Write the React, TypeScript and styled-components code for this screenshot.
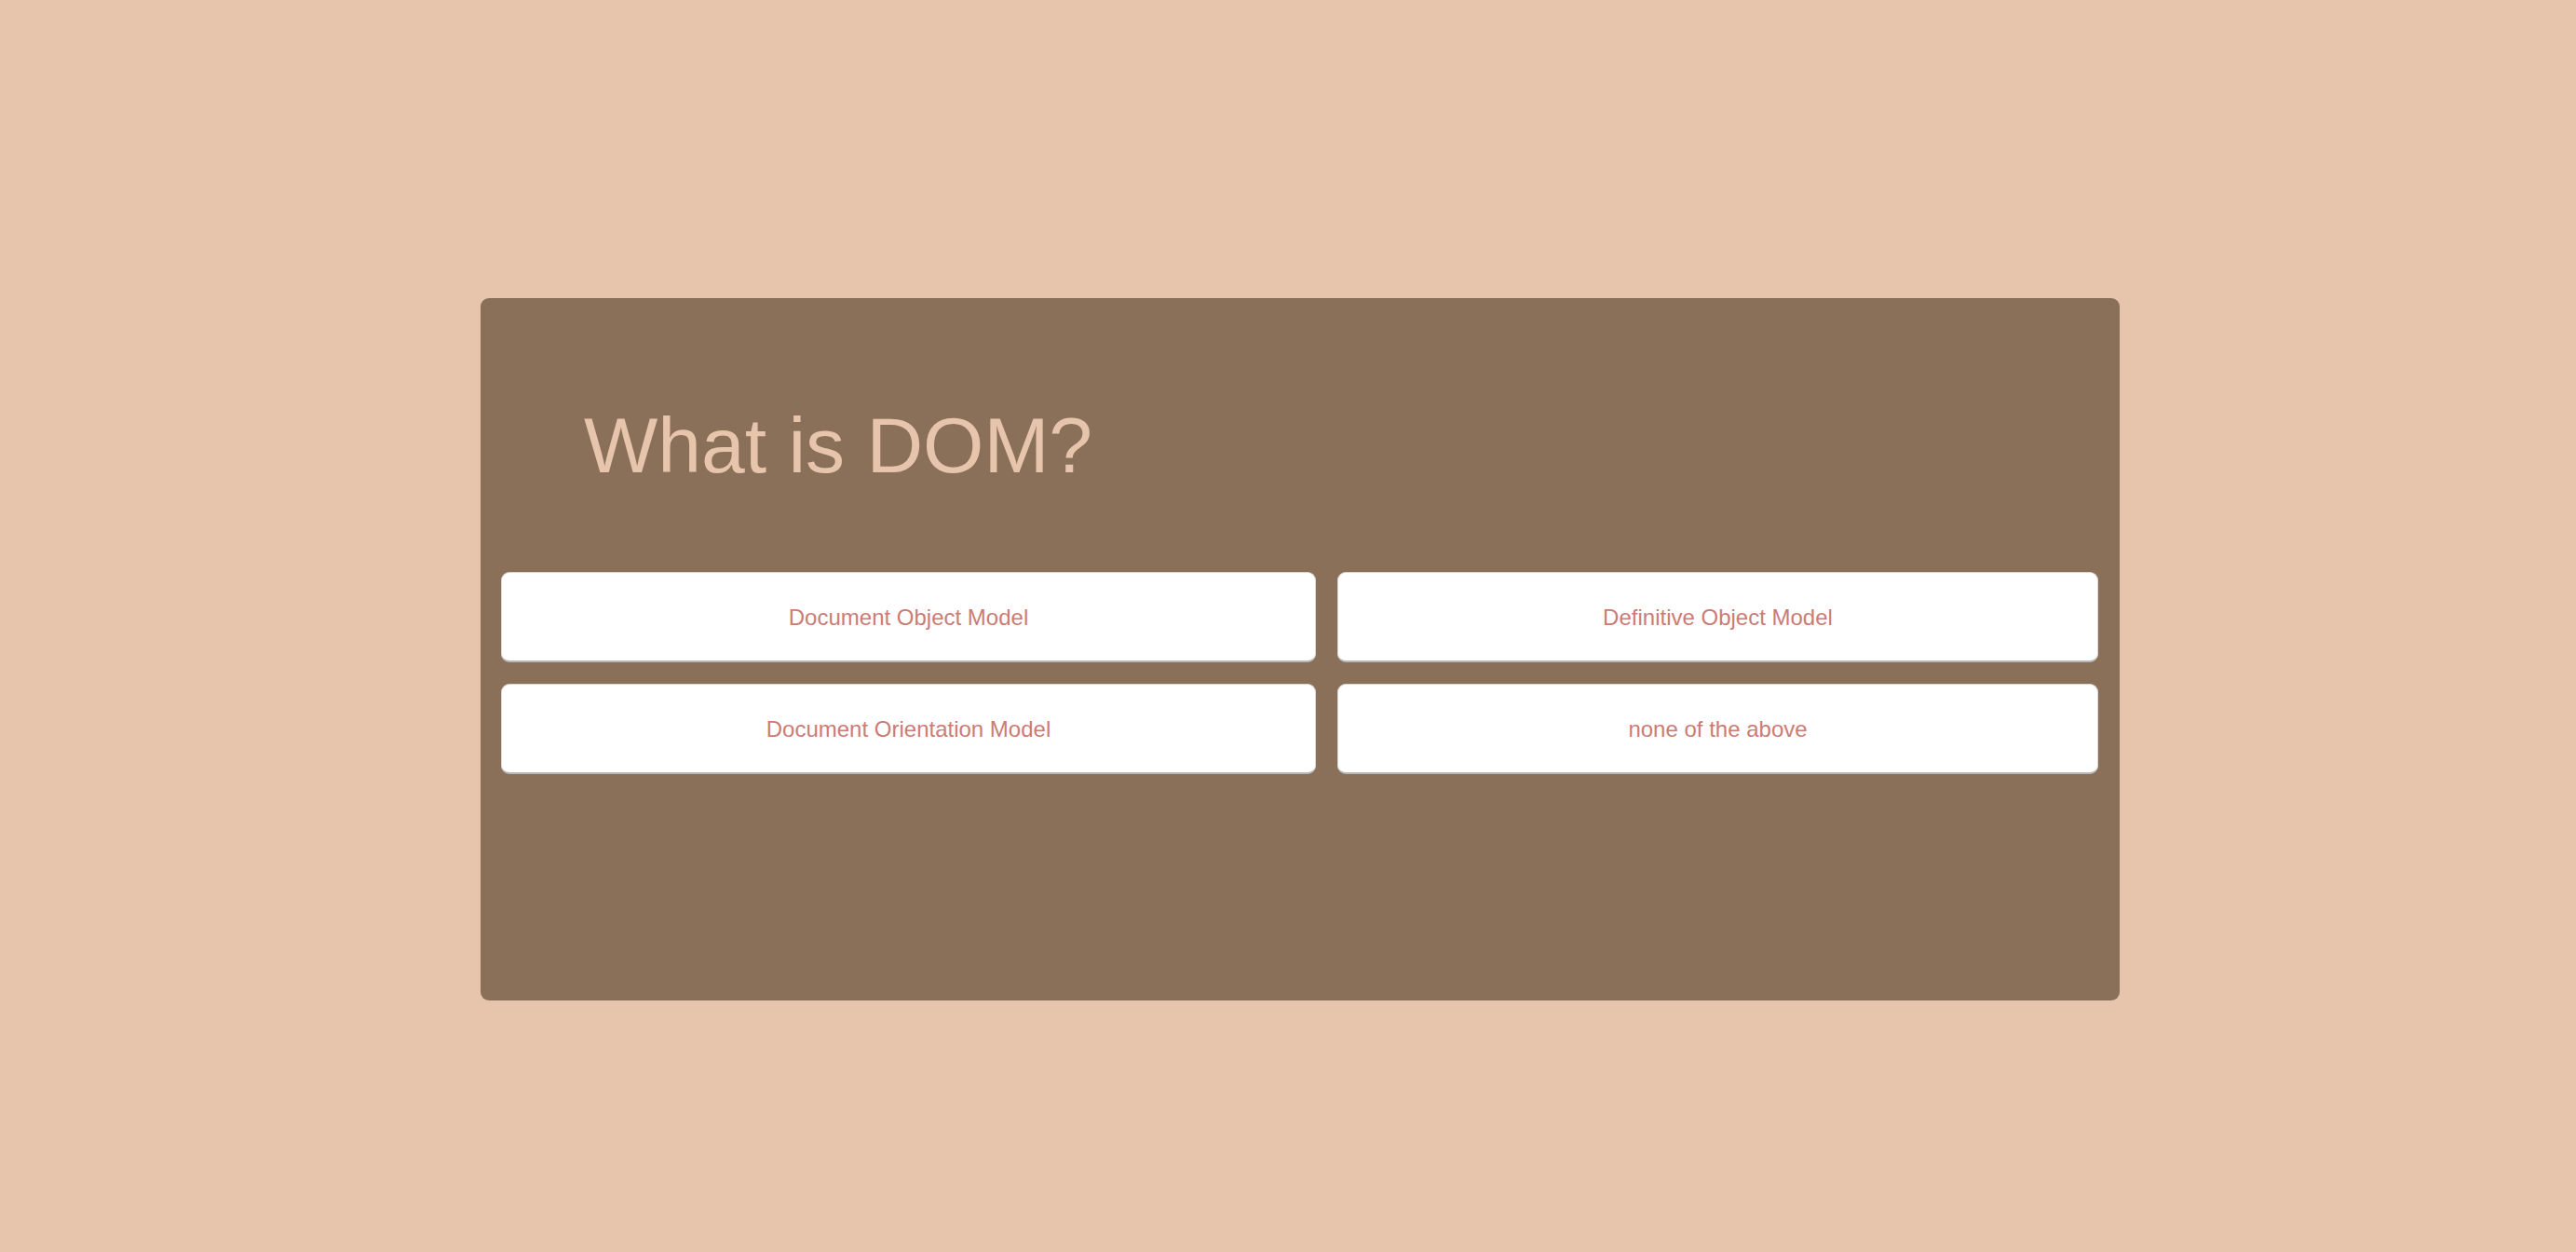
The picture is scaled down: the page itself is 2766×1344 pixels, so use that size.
import React from "react";
import styled, { createGlobalStyle } from "styled-components";

const GlobalStyle = createGlobalStyle`
  html, body {
    margin: 0;
    padding: 0;
    background: #e6c5ac;
    font-family: "Liberation Sans", Arial, sans-serif;
  }
`;

const Page = styled.div`
  min-height: 1344px;
  box-sizing: border-box;
  padding: 320px 0 0 516px;
`;

const Card = styled.section`
  width: 1760px;
  height: 754px;
  box-sizing: border-box;
  background: #8b7059;
  border-radius: 9px;
  padding: 110px 23px 0 22px;
`;

const Title = styled.h1`
  margin: 0 0 88px 89px;
  font-size: 84px;
  line-height: 96px;
  font-weight: 400;
  color: #e6c5ac;
`;

const Answers = styled.div`
  display: grid;
  grid-template-columns: 875px 817px;
  grid-auto-rows: 97px;
  column-gap: 23px;
  row-gap: 23px;
`;

const Answer = styled.button`
  display: flex;
  align-items: center;
  justify-content: center;
  box-sizing: border-box;
  background: #ffffff;
  border: 1px solid #d8d8d8;
  border-bottom: 2px solid #b8b8b8;
  border-radius: 9px;
  font-family: "Liberation Sans", Arial, sans-serif;
  font-size: 24px;
  color: #cb7c74;
  cursor: pointer;
  padding: 2px 0 0;
`;

const answers = [
  "Document Object Model",
  "Definitive Object Model",
  "Document Orientation Model",
  "none of the above",
];

export default function App() {
  return (
    <>
      <GlobalStyle />
      <Page>
        <Card>
          <Title>What is DOM?</Title>
          <Answers>
            {answers.map((a) => (
              <Answer key={a}>{a}</Answer>
            ))}
          </Answers>
        </Card>
      </Page>
    </>
  );
}
